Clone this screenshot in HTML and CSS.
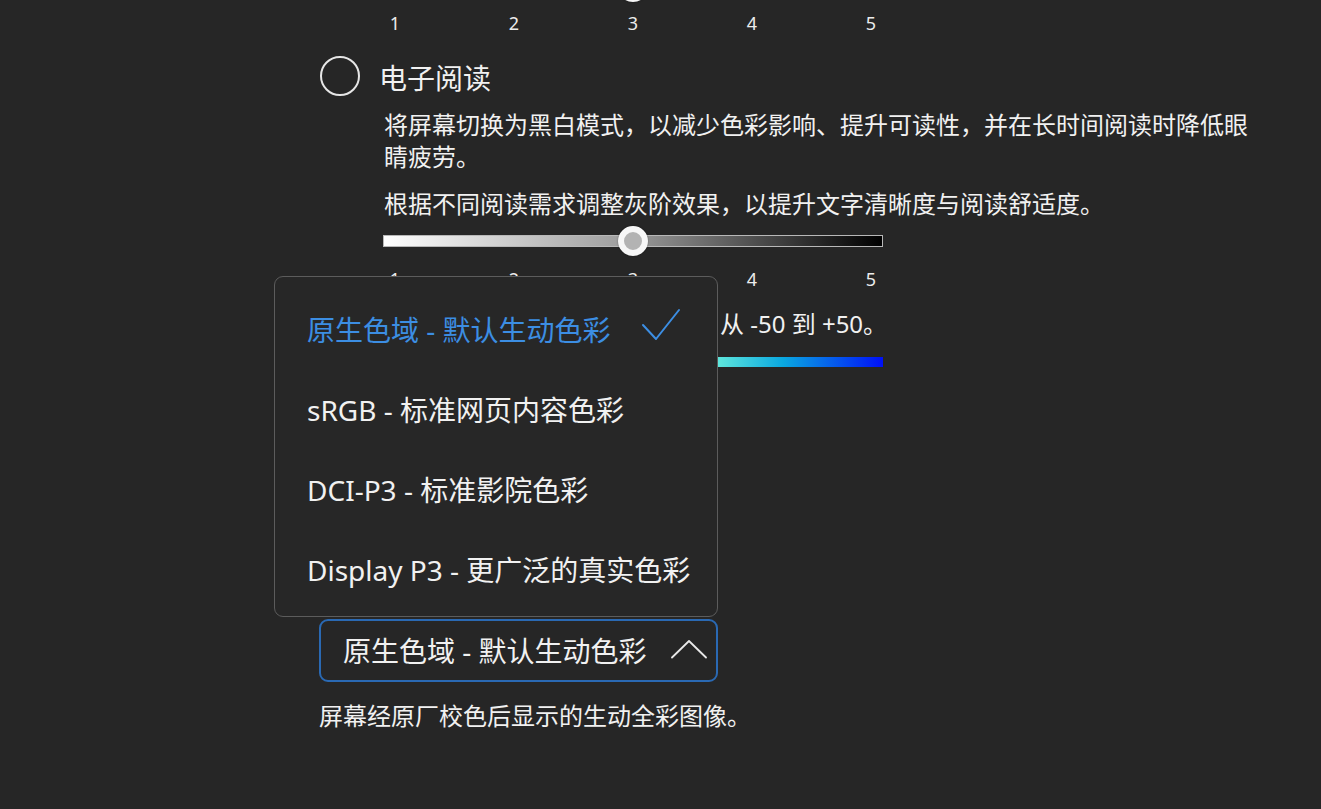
FILE: index.html
```html
<!DOCTYPE html>
<html lang="zh-CN">
<head>
<meta charset="utf-8">
<title>显示设置</title>
<link rel="stylesheet" href="styles.css">
</head>
<body>
<main class="page">
  <div class="slider slider-top">
    <div class="track track-gray">
      <span class="thumb" style="left: 50%"></span>
    </div>
    <div class="ticks">
      <span>1</span><span>2</span><span>3</span><span>4</span><span>5</span>
    </div>
  </div>

  <div class="option">
    <span class="radio"></span>
    <span class="option-title">电子阅读</span>
  </div>

  <div class="option-body">
    <p class="desc">将屏幕切换为黑白模式，以减少色彩影响、提升可读性，并在长时间阅读时降低眼睛疲劳。</p>
    <p class="desc desc-second">根据不同阅读需求调整灰阶效果，以提升文字清晰度与阅读舒适度。</p>
    <div class="slider">
      <div class="track track-gray">
        <span class="thumb" style="left: 50%"></span>
      </div>
      <div class="ticks">
        <span>1</span><span>2</span><span>3</span><span>4</span><span>5</span>
      </div>
    </div>
    <p class="desc temp-text">根据环境光线调整屏幕的色温，从 -50 到 +50。</p>
    <div class="temp-bar"></div>
  </div>

  <div class="gamut">
    <div class="select">
      <ul class="menu">
        <li class="menu-item selected">
          <span>原生色域 - 默认生动色彩</span>
          <svg class="check" width="40" height="34" viewBox="0 0 40 34"><path d="M2 17 L15 31 L38 2" fill="none" stroke="#3c8ee3" stroke-width="2" stroke-linecap="round" stroke-linejoin="round"/></svg>
        </li>
        <li class="menu-item"><span>sRGB - 标准网页内容色彩</span></li>
        <li class="menu-item"><span>DCI-P3 - 标准影院色彩</span></li>
        <li class="menu-item"><span>Display P3 - 更广泛的真实色彩</span></li>
      </ul>
      <button class="select-btn" type="button">
        <span>原生色域 - 默认生动色彩</span>
        <svg class="chevron" width="36" height="20" viewBox="0 0 36 20"><path d="M1 18.5 L18 2 L35 18.5" fill="none" stroke="#e8e8e8" stroke-width="1.8" stroke-linecap="round" stroke-linejoin="round"/></svg>
      </button>
    </div>
    <p class="caption">屏幕经原厂校色后显示的生动全彩图像。</p>
  </div>
</main>
</body>
</html>
```

FILE: styles.css
```css
html, body {
  margin: 0;
  padding: 0;
}

body {
  background: #262626;
  color: #f1f1f1;
  font-family: "Noto Sans", "Noto Sans CJK SC", sans-serif;
  overflow: hidden;
  height: 809px;
}

.page {
  padding-left: 319px;
}

p {
  margin: 0;
}

/* sliders */
.slider {
  width: 500px;
}

.slider-top {
  margin-top: -20px;
  margin-left: 64px;
}

.track {
  position: relative;
  height: 12px;
  box-sizing: border-box;
  border: 1px solid #b8b8b8;
}

.track-gray {
  background: linear-gradient(to right, #ffffff 0%, #9a9a9a 50%, #000000 100%);
}

.thumb {
  position: absolute;
  top: 50%;
  width: 30px;
  height: 30px;
  box-sizing: border-box;
  border-radius: 50%;
  background: #b3b3b3;
  border: 6px solid #f7f7f7;
  transform: translate(-50%, -50%);
  box-shadow: 0 0 2px rgba(0, 0, 0, 0.4);
}

.slider-top .thumb {
  width: 32px;
  height: 32px;
}

.ticks {
  display: flex;
  justify-content: space-between;
  padding: 0 6px;
  margin-top: 20px;
  font-size: 18px;
  line-height: 24px;
  color: #ececec;
}

.slider-top .ticks {
  margin-top: 19px;
}

.ticks span {
  width: 12px;
  text-align: center;
}

/* option row */
.option {
  display: flex;
  align-items: center;
  gap: 19px;
  margin-top: 21px;
  height: 40px;
}

.radio {
  width: 40px;
  height: 40px;
  box-sizing: border-box;
  margin-left: 1px;
  border: 2px solid #e6e6e6;
  border-radius: 50%;
}

.option-title {
  font-size: 28px;
  line-height: 40px;
  margin-top: 3px;
}

.option-body {
  padding-left: 65px;
}

.desc {
  font-size: 24px;
  line-height: 32px;
  max-width: 870px;
  margin-top: 13px;
}

.desc-second {
  margin-top: 15px;
}

.option-body .slider {
  margin-top: 15px;
  margin-left: -1px;
}

.temp-text {
  margin-top: 17px;
  white-space: nowrap;
}

.temp-bar {
  width: 500px;
  height: 10px;
  margin-top: 17px;
  margin-left: -1px;
  background: linear-gradient(to right, #ff8a1c 0%, #ffd28a 20%, #f4f4f4 38%, #5ee6dc 67%, #0aa8e0 80%, #0010f8 100%);
}

/* gamut select */
.gamut {
  margin-top: 252px;
}

.select {
  position: relative;
  width: 399px;
}

.select-btn {
  display: flex;
  align-items: center;
  justify-content: space-between;
  width: 399px;
  height: 63px;
  box-sizing: border-box;
  padding: 0 9px 0 22px;
  background: #262626;
  border: 2px solid #2a69b3;
  border-radius: 9px;
  color: #f1f1f1;
  font-family: inherit;
  font-size: 28px;
  line-height: 40px;
  white-space: nowrap;
  cursor: pointer;
}

.chevron {
  margin-top: -4px;
}

.menu {
  position: absolute;
  right: 0;
  bottom: calc(100% + 2px);
  width: 444px;
  margin: 0;
  padding: 12px 0 7px;
  box-sizing: border-box;
  list-style: none;
  background: #272727;
  border: 1.5px solid #5c5c5c;
  border-radius: 9px;
  z-index: 2;
}

.menu-item {
  display: flex;
  align-items: center;
  justify-content: space-between;
  height: 80px;
  padding: 0 36px 0 32px;
  font-size: 28px;
  color: #f1f1f1;
  white-space: nowrap;
}

.menu-item.selected {
  color: #3c8ee3;
}

.check {
  flex: none;
  margin-bottom: 8px;
}

.caption {
  font-size: 24px;
  line-height: 32px;
  margin-top: 18px;
}
```
